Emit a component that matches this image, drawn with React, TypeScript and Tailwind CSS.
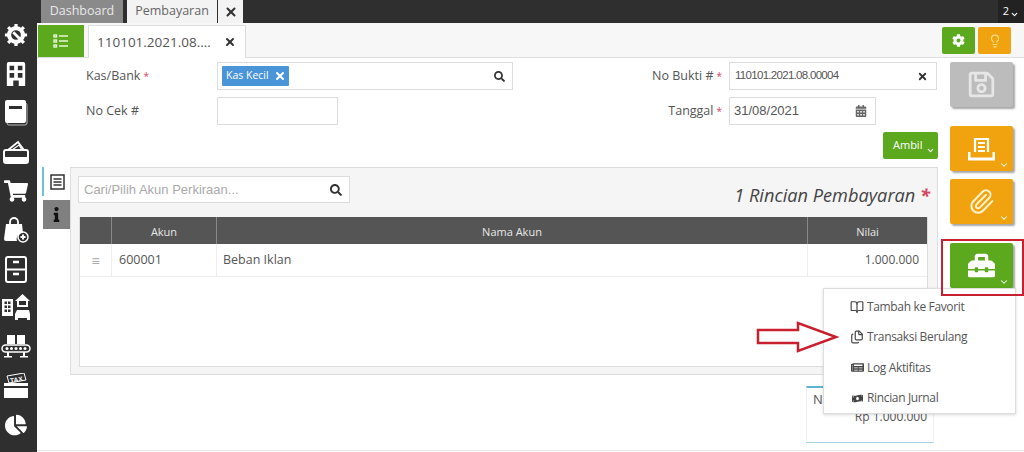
import { X, ChevronDown, Lightbulb, Paperclip, BookOpen, Files } from 'lucide-react'
import {
  FaCalendarAlt, FaChartPie, FaCog, FaInfo, FaMoneyBillWave, FaNewspaper, FaRegSave, FaSearch, FaShoppingCart, FaToolbox,
} from 'react-icons/fa'

const sans = "font-['Open_Sans',sans-serif]"
const arial = "font-['Liberation_Sans',Arial,sans-serif]"

function GearWrench() {
  return (
    <svg width="24" height="24" viewBox="0 0 26 26" fill="none" stroke="#fff">
      <circle cx="13" cy="13" r="7.500" strokeWidth="4.500" />
      <path d="M13 1v4M13 21v4M1 13h4M21 13h4M4.500 4.500l3 3M18.500 18.500l3 3M21.500 4.500l-3 3M7.500 18.500l-3 3" strokeWidth="3.500" />
      <path d="M10 10l7 7" strokeWidth="3" />
    </svg>
  )
}

function Office() {
  return (
    <svg width="22" height="24" viewBox="0 0 24 26" fill="#fff">
      <path fillRule="evenodd" d="M2 2a2 2 0 0 1 2-2h16a2 2 0 0 1 2 2v24h-7v-6H9v6H2zM5 4v5h5V4zm9 0v5h5V4zM5 12v5h5v-5zm9 0v5h5v-5z" />
    </svg>
  )
}

function Ledger() {
  return (
    <svg width="24" height="26" viewBox="0 0 24 26" fill="none">
      <rect x="3" y="3" width="20" height="22" rx="2" stroke="#bbb" strokeWidth="1" />
      <path fillRule="evenodd" fill="#fff" d="M3 0h17a2 2 0 0 1 2 2v19a2 2 0 0 1-2 2H3a2 2 0 0 1-2-2V2a2 2 0 0 1 2-2zm2 6v3h13V6z" />
    </svg>
  )
}

function Wallet() {
  return (
    <svg width="26" height="24" viewBox="0 0 26 24" fill="none" stroke="#fff">
      <path d="M5 10l10-8 6 8" strokeWidth="1.800" />
      <path d="M9 10l7-5 3 5" strokeWidth="1.200" />
      <rect x="1" y="10" width="24" height="13" rx="2" strokeWidth="2" />
      <rect x="1" y="17" width="24" height="6" fill="#fff" strokeWidth="0" />
    </svg>
  )
}

function BagPlus() {
  return (
    <svg width="26" height="26" viewBox="0 0 26 26" fill="#fff">
      <path fill="none" stroke="#fff" strokeWidth="1.800" d="M7 8V5a4 4 0 0 1 8 0v3" />
      <path d="M3 7h16l1 9a6 6 0 0 0-6 8H3a2 2 0 0 1-2-2z" />
      <circle cx="20" cy="20" r="5" fill="none" stroke="#fff" strokeWidth="1.500" />
      <path d="M17.500 19h5v2h-5zM19 17.500h2v5h-2z" />
    </svg>
  )
}

function Cabinet() {
  return (
    <svg width="22" height="27" viewBox="0 0 22 27" fill="none" stroke="#fff" strokeWidth="2">
      <rect x="1" y="1" width="20" height="25" rx="2" />
      <path d="M1 13.500h20" />
      <path d="M8 6h6M8 18h6" strokeWidth="2.500" />
    </svg>
  )
}

function Properties() {
  return (
    <svg width="28" height="28" viewBox="0 0 28 28" fill="#fff">
      <path fillRule="evenodd" d="M0 5h11v17H0zm2.500 2.500v2.500h2.500V7.500zm3.500 0v2.500h2.500V7.500zm-3.500 4v2.500h2.500v-2.500zm3.500 0v2.500h2.500v-2.500zm-3.500 4v2.500h2.500v-2.500zm3.500 0v2.500h2.500v-2.500z" />
      <path d="M20.500 0L28 7h-2v6H15V7h-2zM17 7v4h7V7z" fillRule="evenodd" />
      <path d="M15 16h12l1 4v6h-3v-2H16v2h-3v-6z" />
    </svg>
  )
}

function Conveyor() {
  return (
    <svg width="30" height="24" viewBox="0 0 30 24" fill="none">
      <rect x="6" y="0" width="8" height="9" fill="#fff" />
      <rect x="16" y="0" width="8" height="9" fill="#fff" />
      <rect x="1" y="10" width="28" height="7" rx="3.500" stroke="#fff" strokeWidth="1.500" />
      <g fill="#fff">
        <circle cx="6" cy="13.500" r="1.500" /><circle cx="10.500" cy="13.500" r="1.500" /><circle cx="15" cy="13.500" r="1.500" />
        <circle cx="19.500" cy="13.500" r="1.500" /><circle cx="24" cy="13.500" r="1.500" />
        <path d="M6 17h2v4H6zM22 17h2v4h-2zM3 21h8v1.500H3zM19 21h8v1.500h-8z" />
      </g>
    </svg>
  )
}

function TaxBox() {
  return (
    <svg width="26" height="26" viewBox="0 0 26 26" fill="none">
      <path d="M4 3l17-3 2 7-17 3z" stroke="#fff" strokeWidth="1" />
      <text x="7" y="9" fontSize="6.500" fontWeight="700" fill="#fff" transform="rotate(-10 13 6)" fontFamily="Liberation Sans, sans-serif">TAX</text>
      <rect x="1" y="10" width="24" height="3" fill="#fff" />
      <rect x="1" y="15" width="24" height="10" fill="#fff" />
    </svg>
  )
}

const sideIcons = [
  <GearWrench />, <Office />, <Ledger />, <Wallet />, <FaShoppingCart size={24} color="#fff" />, <BagPlus />,
  <Cabinet />, <Properties />, <Conveyor />, <TaxBox />, <FaChartPie size={22} color="#fff" />,
]

function Sidebar() {
  return (
    <div className="w-[37px] h-full shrink-0 bg-[#2f2f2f] pt-[15px] pr-[5px] flex flex-col">
      {sideIcons.map((icon, i) => (
        <div key={i} className="h-[39.100px] shrink-0 flex items-center justify-center">{icon}</div>
      ))}
    </div>
  )
}

function TopBar() {
  return (
    <div className={`h-[23px] shrink-0 bg-[#2f2f2f] flex items-end pl-[4px] text-[12.500px] ${sans}`}>
      <div className="w-[82px] h-[23px] bg-[#8a8a8a] text-[#e8e8e8] flex items-center justify-center">Dashboard</div>
      <div className="w-[90px] h-[23px] ml-[4px] bg-[#f3f3f3] text-[#666] flex items-center justify-center">Pembayaran</div>
      <div className="w-[25px] h-[23px] ml-[1px] bg-[#f3f3f3] flex items-center justify-center">
        <X size={14} strokeWidth={3.500} color="#333" />
      </div>
      <div className="ml-auto w-[26px] h-[23px] bg-[#222] text-white flex items-center justify-center text-[11px] gap-[1px]">
        2<ChevronDown size={9} strokeWidth={3} className="mt-[6px]" />
      </div>
    </div>
  )
}

function TabRow() {
  return (
    <div className={`h-[35px] shrink-0 bg-[#f7f7f7] border-b border-[#ddd] flex items-end pl-[1px] ${sans}`}>
      <div className="w-[46px] h-[32px] bg-[#5ca91d] flex items-center justify-center">
        <svg width="16" height="14" viewBox="0 0 16 14" fill="none" stroke="#e8f5d8" strokeWidth="1.400">
          <rect x="1" y="1" width="2.500" height="2" /><rect x="1" y="6" width="2.500" height="2" /><rect x="1" y="11" width="2.500" height="2" />
          <path d="M6 2h9M6 7h9M6 12h9" />
        </svg>
      </div>
      <div className="w-[158px] h-[33px] -mb-px ml-[4px] bg-white border border-b-0 border-[#ddd] flex items-center pl-[8px] text-[#555] text-[13.500px]">
        <span className="w-[127px] whitespace-nowrap">110101.2021.08....</span>
        <X size={12} strokeWidth={4} color="#333" />
      </div>
      <div className="ml-auto mr-[13px] mb-[3px] flex gap-[3px]">
        <div className="w-[33px] h-[27px] rounded-[2px] bg-[#5ca91d] flex items-center justify-center">
          <FaCog size={13} color="#fff" />
        </div>
        <div className="w-[33px] h-[27px] rounded-[2px] bg-[#f0a30f] flex items-center justify-center">
          <Lightbulb size={14} color="#ffdf8a" />
        </div>
      </div>
    </div>
  )
}

function Star() {
  return <span className="text-[#d9455f] text-[10px] ml-[3px]">*</span>
}

function FormArea() {
  return (
    <div className={`w-[901px] pl-[49px] pt-[4px] text-[12.500px] text-[#555] ${sans}`}>
      <div className="flex h-[28px] items-center">
        <div className="w-[131px]">Kas/Bank<Star /></div>
        <div className="w-[296px] h-[28px] border border-[#ddd] flex items-center pl-[4px] pr-[6px]">
          <span className="h-[20px] w-[67px] bg-[#4a94d8] text-white text-[10.500px] flex items-center pl-[4px] gap-[5px] rounded-[1px]">
            Kas Kecil <X size={12} strokeWidth={4} />
          </span>
          <FaSearch size={11} color="#333" className="ml-auto mr-[1px]" />
        </div>
        <div className="w-[216px] text-right pr-[7px]">No Bukti #<Star /></div>
        <div className={`w-[208px] h-[28px] border border-[#ddd] flex items-center pl-[5px] pr-[8px] text-[11.500px] tracking-[-0.7px] ${arial}`}>
          110101.2021.08.00004
          <X size={11} strokeWidth={4} color="#333" className="ml-auto" />
        </div>
      </div>
      <div className="flex h-[28px] items-center mt-[7px]">
        <div className="w-[131px]">No Cek #</div>
        <div className="w-[121px] h-[28px] border border-[#ddd]" />
        <div className="w-[391px] text-right pr-[7px]">Tanggal<Star /></div>
        <div className={`w-[147px] h-[28px] border border-[#ddd] flex items-center pl-[4px] pr-[8px] text-[13px] ${arial}`}>
          31/08/2021
          <FaCalendarAlt size={12} color="#666" className="ml-auto" />
        </div>
      </div>
      <div className="flex justify-end mt-[7px]">
        <div className="w-[55px] h-[27px] rounded-[2px] bg-[#5ca91d] text-white text-[11px] flex items-center pl-[10px] gap-[4px]">
          Ambil<ChevronDown size={9} strokeWidth={3} className="mt-[9px]" />
        </div>
      </div>
    </div>
  )
}

function SideTabs() {
  return (
    <div className="w-[28px] shrink-0 flex flex-col items-end">
      <div className="w-[28px] h-[29px] bg-white border-l-2 border-[#6fc0dc] flex items-center justify-center">
        <svg width="15" height="16" viewBox="0 0 15 16" fill="none" stroke="#333">
          <rect x="1" y="1" width="13" height="14" strokeWidth="1.500" />
          <path d="M3.500 5h8M3.500 8h8M3.500 11h8" strokeWidth="1.300" />
        </svg>
      </div>
      <div className="w-[27px] h-[29px] mt-[4px] bg-[#808080] flex items-center justify-center">
        <FaInfo size={15} color="#111" />
      </div>
    </div>
  )
}

function Table() {
  return (
    <div className={`w-[849px] h-[150px] mt-[4px] bg-white border-x border-b border-[#ddd] text-[11px] ${sans}`}>
      <div className="h-[27px] bg-[#555] text-[#e8e8e8] grid grid-cols-[32px_105px_591px_1fr] items-stretch">
        <div className="border-r border-[#888]" />
        <div className="border-r border-[#888] flex items-center justify-center pt-[3px]">Akun</div>
        <div className="border-r border-[#888] flex items-center justify-center pt-[3px]">Nama Akun</div>
        <div className="flex items-center justify-center pt-[3px]">Nilai</div>
      </div>
      <div className="h-[33px] border-b border-[#eee] text-[12.500px] text-[#555] grid grid-cols-[32px_105px_591px_1fr] items-stretch">
        <div className="border-r border-[#eee] flex items-center justify-center text-[#aaa] text-[14px]">≡</div>
        <div className="border-r border-[#eee] flex items-center pl-[7px]">600001</div>
        <div className="border-r border-[#eee] flex items-center pl-[6px]">Beban Iklan</div>
        <div className="flex items-center justify-end pr-[8px] text-[12px]">1.000.000</div>
      </div>
    </div>
  )
}

function Panel() {
  return (
    <div className="flex pl-[5px] mt-[8px]">
      <SideTabs />
      <div className="w-[868px] h-[208px] bg-[#f5f5f5] border border-[#ddd] pl-[8px] pt-[8px]">
        <div className="flex justify-between items-end h-[37px] pr-[7px]">
          <div className={`w-[272px] h-[27px] -ml-px self-start bg-white border border-[#ddd] flex items-center pl-[5px] pr-[7px] text-[13px] text-[#aaa] ${arial}`}>
            Cari/Pilih Akun Perkiraan...
            <FaSearch size={12} color="#333" className="ml-auto" />
          </div>
          <div className={`text-[18.200px] italic text-[#444] leading-[24px] mb-[6px] ${sans}`}>
            1 Rincian Pembayaran <span className="text-[#d9455f] font-bold">*</span>
          </div>
        </div>
        <Table />
      </div>
    </div>
  )
}

function ActionBtn({ color, children, caret }: { color: string; children: React.ReactNode; caret?: boolean }) {
  return (
    <div className={`relative w-[63px] h-[45px] rounded-[2px] shadow-[2px_2px_2px_rgba(0,0,0,0.35)] flex items-center justify-center ${color}`}>
      {children}
      {caret && <ChevronDown size={10} strokeWidth={2.500} color="#fff" className="absolute right-[4px] bottom-[1px]" />}
    </div>
  )
}

function Actions() {
  return (
    <div className="w-[63px] ml-[9px] pt-[4px] flex flex-col">
      <ActionBtn color="bg-[#bcbcbc]"><FaRegSave size={29} color="#e6e6e6" /></ActionBtn>
      <div className="mt-[19px]">
        <ActionBtn color="bg-[#f0a30f]" caret>
          <svg width="27" height="24" viewBox="0 0 27 24" fill="none" stroke="#fff" strokeWidth="2.200">
            <path d="M7 15V2h13v13M10 6h7M10 10h7M10 14h7" />
            <path d="M1 15v7h25v-7" strokeWidth="3" />
          </svg>
        </ActionBtn>
      </div>
      <div className="mt-[8px]">
        <ActionBtn color="bg-[#f0a30f]" caret><Paperclip size={27} strokeWidth={1.800} color="#fff3d0" /></ActionBtn>
      </div>
      <div className="mt-[19px]">
        <ActionBtn color="bg-[#5ca91d]" caret><FaToolbox size={27} color="#fff" /></ActionBtn>
      </div>
    </div>
  )
}

function Summary() {
  return (
    <div className={`w-[128px] h-[57px] mt-[11px] ml-[769px] border-t-2 border-[#5bb5d5] border-b border-b-[#a9d4e4] border-x border-x-[#eee] bg-white px-[6px] text-[12px] text-[#555] ${sans}`}>
      <div className="pt-[3px] leading-[17px] text-[13px]">N</div>
      <div className="text-right leading-[17px]">Rp 1.000.000</div>
    </div>
  )
}

function DropMenu() {
  const items = [
    { icon: <BookOpen size={14} color="#444" />, label: 'Tambah ke Favorit' },
    { icon: <Files size={14} color="#444" />, label: 'Transaksi Berulang' },
    { icon: <FaNewspaper size={13} color="#444" />, label: 'Log Aktifitas' },
    { icon: <FaMoneyBillWave size={11} color="#444" />, label: 'Rincian Jurnal' },
  ]
  return (
    <div className={`absolute left-[823px] top-[288px] w-[193px] h-[126px] bg-white border border-[#ddd] shadow-[0_1px_3px_rgba(0,0,0,0.15)] pt-[3px] text-[12px] tracking-[-0.35px] text-[#555] ${sans}`}>
      {items.map((it) => (
        <div key={it.label} className="h-[30.300px] flex items-center pl-[26px] gap-[3px]">
          <span className="w-[14px] flex justify-center">{it.icon}</span>
          {it.label}
        </div>
      ))}
    </div>
  )
}

export default function App() {
  return (
    <div className="relative w-[1024px] h-[452px] overflow-hidden bg-white flex">
      <Sidebar />
      <div className="flex-1 min-w-0 flex flex-col">
        <TopBar />
        <TabRow />
        <div className="flex h-[393px] border-b border-[#e5e5e5]">
          <div className="w-[904px]">
            <FormArea />
            <Panel />
            <Summary />
          </div>
          <Actions />
        </div>
      </div>
      <DropMenu />
      {/* red marks drawn over the screenshot */}
      <div className="absolute left-[941px] top-[239px] w-[83px] h-[57px] border-2 border-[#c8202f]" />
      <svg className="absolute left-[756px] top-[320px]" width="84" height="34" viewBox="0 0 84 34" fill="#fff" stroke="#c8202f" strokeWidth="2.500">
        <path d="M2 10h40V3l38 14-38 14v-8H2z" />
      </svg>
    </div>
  )
}
